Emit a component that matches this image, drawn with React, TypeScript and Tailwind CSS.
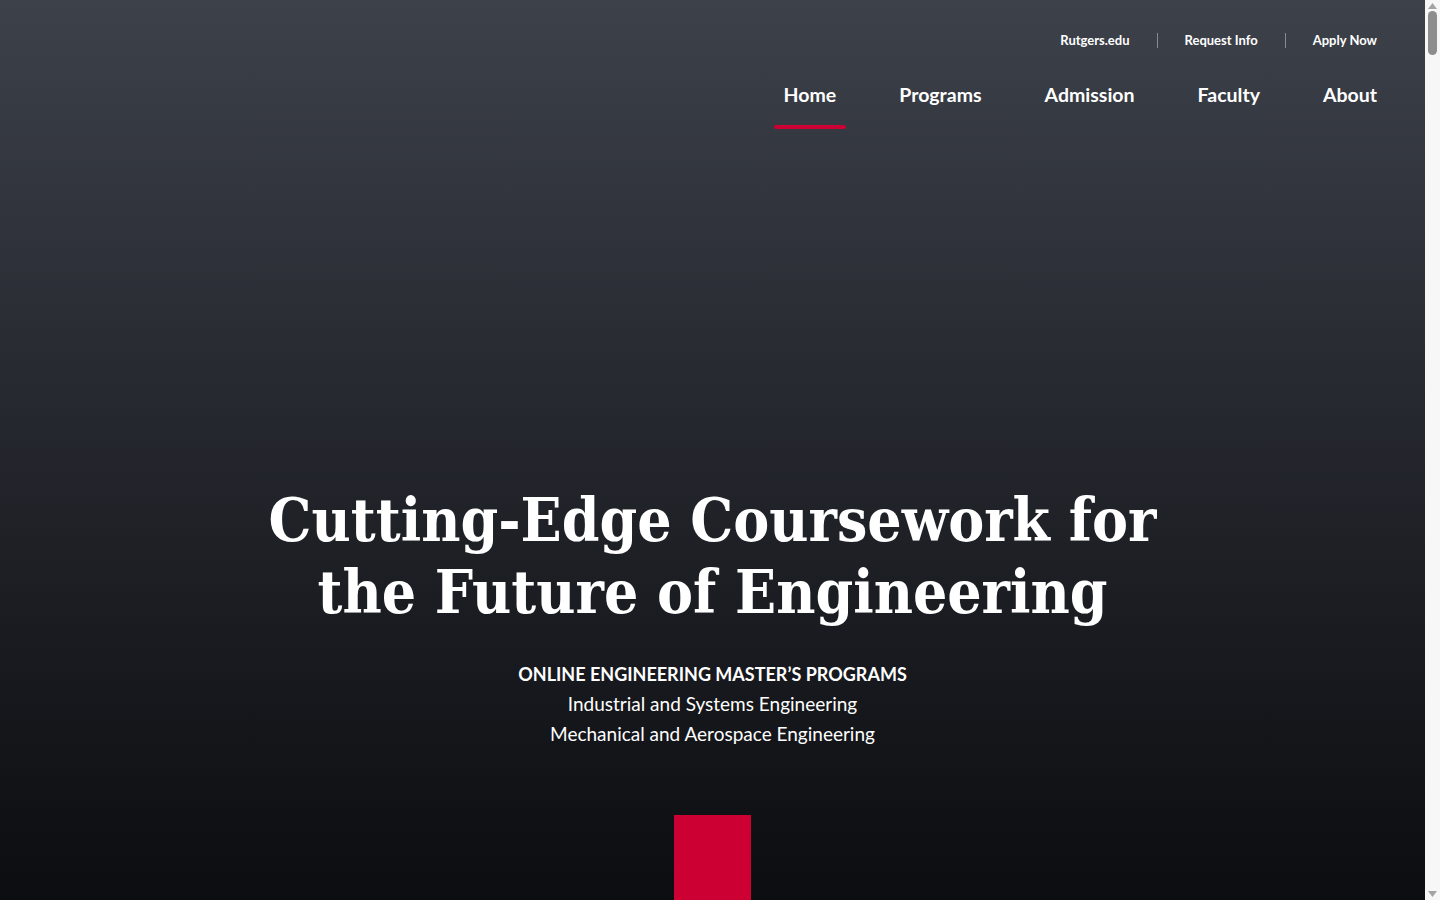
const utilityLinks = ['Rutgers.edu', 'Request Info', 'Apply Now'];
const navLinks = ['Home', 'Programs', 'Admission', 'Faculty', 'About'];

function Scrollbar() {
  // classic browser scrollbar as it appears in the reference
  return (
    <div className="fixed right-0 top-0 h-screen w-[15px] bg-[#f7f7f7]">
      <svg className="absolute left-[3px] top-[3px]" width="9" height="6" viewBox="0 0 9 6">
        <path d="M4.5 0L9 6H0z" fill="#a3a3a3" />
      </svg>
      <div className="absolute left-[3px] top-[11px] h-[44px] w-[9px] rounded-full bg-[#8d8d8d]" />
      <svg className="absolute bottom-[3px] left-[3px]" width="9" height="6" viewBox="0 0 9 6">
        <path d="M0 0h9L4.5 6z" fill="#a3a3a3" />
      </svg>
    </div>
  );
}

export default function App() {
  return (
    <div className="min-h-screen bg-[#08090b] pr-[15px] text-white font-['Lato','Noto_Sans',sans-serif]">
      {/* Hero */}
      <section className="bg-gradient-to-b from-[#3d414a] to-[#050608] pb-[80px]">
        <header className="flex flex-col items-end pr-12 pt-[31px]">
          <ul className="flex items-center text-[13px] font-bold leading-[18px]">
            {utilityLinks.map((label, i) => (
              <li key={label} className="flex items-center">
                {i > 0 && <span className="mx-[27px] h-[15px] w-px bg-white/40" />}
                <a href="#">{label}</a>
              </li>
            ))}
          </ul>
          <nav className="mt-[21px]">
            <ul className="flex gap-[63px] text-[19.5px] font-bold leading-6">
              {navLinks.map((label, i) => (
                <li key={label} className="relative pt-[13px] pb-[22px]">
                  <a href="#">{label}</a>
                  {i === 0 && (
                    <span className="absolute -left-[10px] -right-[10px] bottom-0 h-1 rounded-full bg-[#cc0033]" />
                  )}
                </li>
              ))}
            </ul>
          </nav>
        </header>

        <div className="mt-[355px] flex flex-col items-center text-center">
          <h1 className="font-['DejaVu_Serif_Condensed','Liberation_Serif',serif] text-[60px] font-bold leading-[72px]">
            Cutting-Edge Coursework for
            <br />
            the Future of Engineering
          </h1>
          <div className="mt-[31px] text-[19px] leading-[30px]">
            <p className="text-[18px] font-bold">ONLINE ENGINEERING MASTER’S PROGRAMS</p>
            <p>Industrial and Systems Engineering</p>
            <p>Mechanical and Aerospace Engineering</p>
          </div>
          <div className="mt-[66px] h-[160px] w-[77px] bg-[#cc0033]" />
        </div>
      </section>

      {/* Rest of page */}
      <section className="min-h-[15000px] bg-[#08090b]" />

      <Scrollbar />
    </div>
  );
}
